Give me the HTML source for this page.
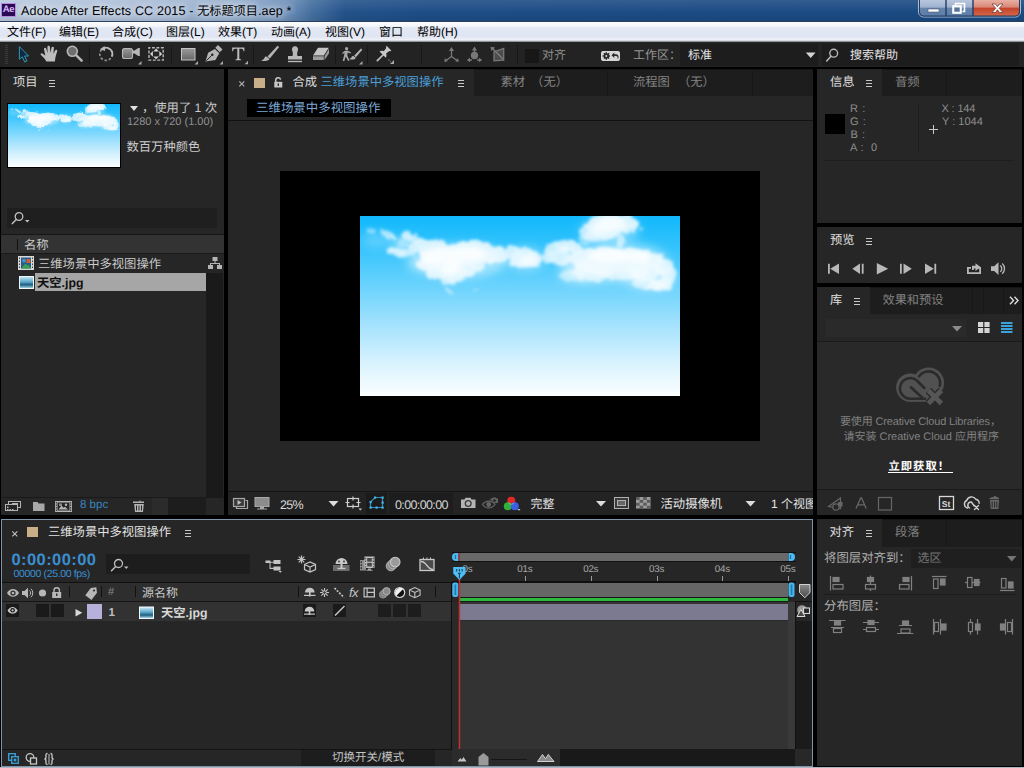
<!DOCTYPE html>
<html lang="zh-CN">
<head>
<meta charset="utf-8">
<title>Adobe After Effects CC 2015 - 无标题项目.aep *</title>
<style>
*{box-sizing:border-box;margin:0;padding:0}
html,body{width:1024px;height:768px;overflow:hidden;background:#000}
body{font-family:"Liberation Sans","Noto Sans CJK SC",sans-serif;font-size:12.3px;color:#cfcfcf;line-height:1;text-rendering:geometricPrecision}
#app{position:relative;width:1024px;height:768px;overflow:hidden;background:#000}
.a{position:absolute}
.tx{white-space:nowrap}
.t{position:absolute;white-space:nowrap;line-height:14px;height:14px}
svg.i{position:absolute;overflow:visible}
.panel{position:absolute;background:#262626}
.dk{background:#1d1d1d}
.dim{color:#828282}
.blue{color:#4a9fd9}

/* ---- title bar ---- */
#title{left:0;top:0;width:1024px;height:21px;background:
 linear-gradient(to right,#b9c9df 0px,#a9bcd7 150px,#8fa9cb 240px,#6f90ba 285px,#446f9f 312px,#23528a 345px,#1d4d86 420px,#1b4b84 700px,#1a4a82 1024px)}
#title:after{content:"";position:absolute;left:0;right:0;top:0;height:21px;background:linear-gradient(to bottom,rgba(255,255,255,.10),rgba(255,255,255,0) 60%,rgba(0,0,0,.08))}
#tline{left:0;top:21px;width:1024px;height:1px;background:#2c3f5e}
#ttext{left:21px;top:3px;font-size:12.6px;letter-spacing:.14px;color:#000;line-height:16px;height:16px;white-space:nowrap;text-shadow:0 0 6px rgba(255,255,255,.9),0 0 10px rgba(255,255,255,.7)}
#ttext .tx{font-size:12.150px;letter-spacing:0}
#aeico{left:1px;top:3px;width:15px;height:14px;background:#2a0a52;border:1px solid #b58be0;color:#d9b8ff;font-size:9.5px;font-weight:bold;line-height:12px;text-align:center;letter-spacing:-.3px}
/* ---- menu bar ---- */
#menu{left:0;top:22px;width:1024px;height:20px;background:linear-gradient(to bottom,#fbfcfe 0,#f4f6fb 4px,#e3e8f4 6px,#dfe5f2 14px,#e9edf6 17px,#f3f5fa 18px,#b9bdc6 19px,#6d6f73 20px)}
#menu .t{top:3px;color:#000;font-size:12px;line-height:15px;height:15px}
/* ---- toolbar ---- */
#tool{left:0;top:42px;width:1024px;height:25px;background:#232323}
.sep{position:absolute;top:3px;width:1px;height:19px;background:#181818}
</style>
</head>
<body>
<div id="app">
<!-- ===== window title bar ===== -->
<div id="title" class="a"></div>
<div id="tline" class="a"></div>
<div id="aeico" class="a">Ae</div>
<div id="ttext" class="a">Adobe After Effects CC 2015 - <span class="tx">无标题项目</span>.aep *</div>
<!-- window buttons -->
<svg class="i" style="left:917px;top:0" width="105" height="19" viewBox="0 0 105 19">
 <defs>
  <linearGradient id="wb" x1="0" y1="0" x2="0" y2="1"><stop offset="0" stop-color="#b7c6dc"/><stop offset=".45" stop-color="#9fb2cf"/><stop offset=".5" stop-color="#6685ad"/><stop offset="1" stop-color="#5b7eaa"/></linearGradient>
  <linearGradient id="wc" x1="0" y1="0" x2="0" y2="1"><stop offset="0" stop-color="#e9b0a4"/><stop offset=".45" stop-color="#d98776"/><stop offset=".5" stop-color="#c4432a"/><stop offset="1" stop-color="#d4674a"/></linearGradient>
 </defs>
 <path d="M1.5 0V12a5 5 0 0 0 5 5H98.5a5 5 0 0 0 5-5V0" fill="none" stroke="#c9d6e8" stroke-width="1" opacity=".8"/>
 <path d="M2.5 0V12a4 4 0 0 0 4 4H28.5V0Z" fill="url(#wb)"/>
 <path d="M29.5 0H55.5V16H29.5Z" fill="url(#wb)"/>
 <path d="M56.5 0H102.5V12a4 4 0 0 1-4 4H56.5Z" fill="url(#wc)"/>
 <path d="M2.5 0V12a4 4 0 0 0 4 4H98.5a4 4 0 0 0 4-4V0M29 0V16M56 0V16" fill="none" stroke="#283c5c" stroke-width="1"/>
 <rect x="11" y="9" width="11" height="3" fill="#fff" stroke="#4a5a74" stroke-width=".6"/>
 <path d="M38.5 5.5V3.5h9v8h-2" fill="none" stroke="#fff" stroke-width="1.6"/>
 <rect x="36.2" y="6.2" width="7.6" height="6.6" fill="none" stroke="#fff" stroke-width="2"/>
 <rect x="38.3" y="8.3" width="3.4" height="2.6" fill="#5c6f8c"/>
 <path d="M75 4h3.4l2.1 2.7L82.600 4H86l-3.800 4.300L86 12.5h-3.400l-2.100-2.700L78.400 12.500H75l3.800-4.200Z" fill="#fff" stroke="#6a3026" stroke-width=".7"/>
</svg>
<!-- ===== menu bar ===== -->
<div id="menu" class="a">
 <div class="t" style="left:7px"><span class="tx">文件</span>(F)</div>
 <div class="t" style="left:59px"><span class="tx">编辑</span>(E)</div>
 <div class="t" style="left:112px"><span class="tx">合成</span>(C)</div>
 <div class="t" style="left:166px"><span class="tx">图层</span>(L)</div>
 <div class="t" style="left:218px"><span class="tx">效果</span>(T)</div>
 <div class="t" style="left:271px"><span class="tx">动画</span>(A)</div>
 <div class="t" style="left:325px"><span class="tx">视图</span>(V)</div>
 <div class="t" style="left:379px"><span class="tx">窗口</span></div>
 <div class="t" style="left:417px"><span class="tx">帮助</span>(H)</div>
</div>
<!-- ===== toolbar ===== -->
<div id="tool" class="a">
 <div class="a" style="left:5px;top:3px;width:3px;height:20px;background:repeating-linear-gradient(to bottom,#3a3a3a 0,#3a3a3a 1px,#232323 1px,#232323 2px)"></div>
 <div class="sep" style="left:89px"></div><div class="sep" style="left:171px"></div><div class="sep" style="left:253px"></div>
 <div class="sep" style="left:335px"></div><div class="sep" style="left:367px"></div><div class="sep" style="left:421px"></div><div class="sep" style="left:517px"></div>
 <div class="a" style="left:525px;top:7px;width:14px;height:14px;background:#171717"></div>
 <div class="t" style="left:542px;top:6px;font-size:12px;color:#8c8c8c"><span class="tx">对齐</span></div>
 <div class="t" style="left:633px;top:6px;font-size:12px;color:#969696"><span class="tx">工作区：</span></div>
 <div class="a" style="left:680px;top:2px;width:138px;height:22px;background:#1d1d1d"></div>
 <div class="t" style="left:688px;top:6px;font-size:12px;color:#e4e4e4"><span class="tx">标准</span></div>
 <div class="a" style="left:822px;top:2px;width:197px;height:22px;background:#1d1d1d"></div>
 <div class="t" style="left:850px;top:6px;font-size:12px;color:#e4e4e4"><span class="tx">搜索帮助</span></div>
</div>
<svg class="i" style="left:0;top:42px" width="1024" height="25" viewBox="0 42 1024 25">
 <defs>
  <linearGradient id="gg" x1="0" y1="0" x2="0" y2="1"><stop offset="0" stop-color="#9a9a9a"/><stop offset="1" stop-color="#666"/></linearGradient>
 </defs>
 <!-- selection arrow (active) -->
 <path d="M19.400 46.600V59.300l2.900-2.500 2.400 5.200 2.300-1-2.400-5h4Z" fill="#0c2945" stroke="#3596b2" stroke-width="1" stroke-linejoin="miter"/>
 <!-- hand -->
 <path d="M46.300 61.600c-.5-2-2.300-3.700-5.400-6.600-.8-.9.200-2.100 1.400-1.500l3 2.100-1.300-6.300c-.3-1.700 1.800-2.200 2.300-.6l1.300 4.600-.2-6.300c0-1.700 2.300-1.700 2.500 0l.6 6.100 1-5.400c.3-1.600 2.500-1.300 2.400.4l-.5 6 1.700-3.500c.7-1.400 2.600-.6 2.100.9-1.300 3.600-2 6.300-2.300 10.100Z" fill="#bdbdbd"/>
 <!-- zoom -->
 <circle cx="72.300" cy="51.300" r="5" fill="#6e6e6e" stroke="#b6b6b6" stroke-width="1.600"/>
 <path d="M76.300 55.300l5.300 5.300" stroke="#b6b6b6" stroke-width="2.600" stroke-linecap="round"/>
 <!-- rotate -->
 <circle cx="106" cy="54.200" r="6.200" fill="none" stroke="#a8a8a8" stroke-width="1.600" stroke-dasharray="2.400 1.900" opacity=".85"/>
 <path d="M102.500 49a6.200 6.200 0 0 1 9.300 7.600" fill="none" stroke="#b8b8b8" stroke-width="1.700"/>
 <path d="M99.800 49.300l4.800-3.200.6 4.800Z" fill="#b8b8b8"/>
 <!-- camera -->
 <rect x="122.500" y="48.500" width="10" height="10" rx="2" fill="url(#gg)" stroke="#b8b8b8" stroke-width="1.100"/>
 <path d="M133 50.600h1.500l3.800-2.700h1.500v8.200h-1.500l-3.800-2.700H133Z" fill="#b8b8b8"/>
 <path d="M141.500 61v3.500H138Z" fill="#a8a8a8"/>
 <!-- pan behind -->
 <rect x="149" y="47.700" width="14.200" height="12.400" fill="none" stroke="#b8b8b8" stroke-width="1.400" stroke-dasharray="2.900 1.540" stroke-dashoffset="1.450"/>
 <path d="M156.100 48.500l2.900 2.900h-5.800ZM156.100 59.300l2.900-2.900h-5.800ZM150 53.900l2.900-2.900v5.800ZM162.200 53.900l-2.900-2.900v5.800Z" fill="#d0d0d0"/>
 <!-- rectangle -->
 <rect x="181.500" y="48.500" width="13.500" height="11.500" fill="url(#gg)" stroke="#c4c4c4"/>
 <path d="M198 61v3.500h-3.500Z" fill="#a8a8a8"/>
 <!-- pen -->
 <path d="M205.500 61.500l2.600-8.700 6.800-3.900 4.400 4.400-3.900 6.800Z" fill="#b4b4b4"/>
 <path d="M206.300 60.800l5.500-5.500" stroke="#232323" stroke-width="1"/>
 <circle cx="212.300" cy="54.800" r="1.200" fill="#232323"/>
 <path d="M215.300 47.700l2.700-2.700 4.500 4.500-2.700 2.700Z" fill="#b4b4b4"/>
 <path d="M223 61v3.500h-3.500Z" fill="#a8a8a8"/>
 <!-- T -->
 <path d="M232.200 47.600h12.200v3.600h-.8c-.3-1.700-.9-2.500-2.300-2.500h-2v9.300c0 1 .5 1.300 1.800 1.400v.8h-5.600v-.8c1.300-.1 1.800-.4 1.800-1.400v-9.300h-2c-1.400 0-2 .8-2.300 2.500h-.8Z" fill="#bcbcbc"/>
 <path d="M248 60.800v3.500h-3.500Z" fill="#a8a8a8"/>
 <!-- brush -->
 <path d="M277.500 45.800l1.600 1.300-9.300 11.300-2.300-1.900Z" fill="#b4b4b4"/>
 <path d="M267 57l2.600 2.100c-1.300 2-4.500 2.600-8.600 1.300 2.200-.5 3.200-1.600 3.600-3 .5-.9 1.500-1 2.400-.4Z" fill="#b4b4b4"/>
 <!-- stamp -->
 <path d="M292.500 56c.5-2 .5-3.500-.3-5.300a3.100 3.100 0 1 1 5.600 0c-.8 1.800-.8 3.300-.3 5.300h4.500v3.500h-14v-3.500Z" fill="#b8b8b8"/>
 <rect x="288" y="60.800" width="14" height="1.400" fill="#b8b8b8"/>
 <!-- eraser -->
 <path d="M313 55.500l5-7.800h10.800l-5 7.800Z" fill="#c4c4c4"/>
 <path d="M313 56.300h10.800v3.700H313ZM324.600 56l4.400-7.200v4.500l-4.400 6.700Z" fill="#9c9c9c"/>
 <!-- roto brush -->
 <circle cx="346.600" cy="48.600" r="1.600" fill="#a8a8a8"/>
 <path d="M344.300 51l3.300-.6 3.500 2.200-.5 1-3-1.200-.3 3 2.200 5-1.400.6-2.300-4.500-1.600 4.700-1.500-.4 1.500-5.700.3-2.700-1.500 1.600-1-.8Z" fill="#a8a8a8"/>
 <path d="M361 48.600l1.300 1.100-6.400 7.600-1.800-1.500Z" fill="#b4b4b4"/>
 <path d="M353.800 56.200l2 1.700c-1 1.600-3.600 2.100-6.800 1 1.700-.4 2.500-1.300 2.900-2.400.4-.7 1.200-.8 1.900-.3Z" fill="#b4b4b4"/>
 <path d="M362.500 61v3.500H359Z" fill="#a8a8a8"/>
 <!-- puppet pin -->
 <path d="M377.300 60.700l6.200-6.200" stroke="#c0c0c0" stroke-width="1.700" stroke-linecap="round"/>
 <path d="M379.500 51.500c1.500-.9 3-.9 4.300-.3l2.500-3.200c-.6-.9-.3-1.700.5-2l4.500 4.500c-.3.800-1.100 1.100-2 .5l-3.200 2.500c.6 1.300.6 2.800-.3 4.300Z" fill="#c8c8c8"/>
 <path d="M394 60v4h-4Z" fill="#a8a8a8"/>
 <path d="M388.500 59.500l2.200 2.200" stroke="#888" stroke-width="1.200" stroke-dasharray="1.200 1"/>
 <!-- axis modes (dim) -->
 <g fill="#787878" stroke="#787878" stroke-width="1.300">
  <path d="M451.500 50.500v6l-5.500 4M451.500 56.500l5.500 4" fill="none"/>
  <path d="M451.500 47l2.600 4h-5.200ZM444.300 62l.6-4 3 3.200ZM458.700 62l-.6-4-3 3.200Z" stroke="none"/>
  <circle cx="474.500" cy="55.500" r="3" />
  <path d="M474.500 50v2.500M468 60h4M477 60h4" fill="none"/>
  <path d="M474.500 46.500l2.600 4h-5.200ZM466.800 60l3.200-2.200v4.400ZM482.200 60l-3.200-2.200v4.400Z" stroke="none"/>
  <path d="M494 51.800l9.700-3.400v11.800l-9.700.6Z" fill="#4c4c4c"/>
  <path d="M492.500 48.500l11 11" fill="none" stroke-width="1.500"/>
  <path d="M490.500 46.800l4.600.7-3.800 3.600Z" stroke="none"/>
 </g>
 <!-- workspace sync pill -->
 <rect x="601" y="51" width="19" height="10" rx="2" fill="#d6d6d6"/>
 <g fill="#2a2a2a">
  <circle cx="606.300" cy="56" r="2.700"/>
  <path d="M605.600 52.300h1.400v7.400h-1.400ZM602.600 55.300h7.400v1.400h-7.400ZM603.400 53.800l1-1 5.200 5.200-1 1ZM608.600 52.800l1 1-5.200 5.200-1-1Z"/>
  <circle cx="606.300" cy="56" r="1" fill="#d6d6d6"/>
  <path d="M611.500 55.200l2.800-2.800v1.900h1.700c1.700 0 2.600 1.300 2.600 2.600 0 1.100-.5 1.900-1.300 2.400.3-.5.400-.9.400-1.400 0-1-.6-1.800-1.700-1.800h-1.700v1.900Z"/>
 </g>
 <!-- dropdown arrow -->
 <path d="M805.800 52.600h9.800l-4.900 5.400Z" fill="#d4d4d4"/>
 <!-- search magnifier -->
 <circle cx="833.700" cy="53.200" r="3.900" fill="none" stroke="#b8b8b8" stroke-width="1.400"/>
 <path d="M831 56.200l-4.300 4.800" stroke="#b8b8b8" stroke-width="1.600" stroke-linecap="round"/>
</svg>
<!-- shared sky paint servers / filters (artwork is drawn in 320x180 local units) -->
<svg width="0" height="0" style="position:absolute">
 <defs>
  <linearGradient id="sky" x1="0" y1="0" x2="0" y2="1">
   <stop offset="0" stop-color="#11b8fc"/><stop offset=".2" stop-color="#3ac5fc"/><stop offset=".42" stop-color="#72d5fd"/><stop offset=".62" stop-color="#a8e3fd"/><stop offset=".82" stop-color="#d9f3fe"/><stop offset="1" stop-color="#fbfeff"/>
  </linearGradient>
  <filter id="cb" x="-10" y="-10" width="340" height="200" filterUnits="userSpaceOnUse">
   <feTurbulence type="fractalNoise" baseFrequency=".11" numOctaves="3" seed="7" result="n"/>
   <feDisplacementMap in="SourceGraphic" in2="n" scale="7" xChannelSelector="R" yChannelSelector="G" result="d"/>
   <feGaussianBlur in="d" stdDeviation="1.500"/>
  </filter>
  <filter id="cb2" x="-10%" y="-10%" width="120%" height="120%"><feGaussianBlur stdDeviation="5"/></filter>
  <filter id="cb3" x="-10%" y="-10%" width="120%" height="120%"><feGaussianBlur stdDeviation="2.500"/></filter>
  <clipPath id="skyclip"><rect width="320" height="180"/></clipPath>
 </defs>
</svg>
<!-- ===== Project panel ===== -->
<div class="panel" style="left:1px;top:69px;width:223px;height:446px"></div>
<div class="t" style="left:13px;top:75px;color:#dcdcdc"><span class="tx">项目</span></div>
<svg class="i" style="left:49px;top:80px" width="6" height="7"><path d="M0 .5h6M0 3.500h6M0 6.500h6" stroke="#c8c8c8" stroke-width="1"/></svg>
<!-- thumbnail -->
<div class="a" style="left:7px;top:103px;width:114px;height:65px;background:#000"></div>
<svg class="i" style="left:8px;top:104px" width="112" height="63" viewBox="0 0 320 180" preserveAspectRatio="none">
 <rect width="320" height="180" fill="url(#sky)"/>
 <g clip-path="url(#skyclip)">
   <g filter="url(#cb2)" fill="#fff"><ellipse cx="16" cy="24" rx="14" ry="8" opacity="0.22"/><ellipse cx="42" cy="28" rx="12" ry="7" opacity="0.4"/><ellipse cx="100" cy="45" rx="48" ry="17" opacity="0.45"/><ellipse cx="60" cy="45" rx="14" ry="12" opacity="0.3"/><ellipse cx="255" cy="46" rx="54" ry="20" opacity="0.45"/><ellipse cx="222" cy="58" rx="24" ry="10" opacity="0.4"/><ellipse cx="250" cy="14" rx="30" ry="13" opacity="0.35"/><ellipse cx="290" cy="62" rx="26" ry="12" opacity="0.4"/><ellipse cx="166" cy="43" rx="18" ry="12" opacity="0.35"/></g>
   <g filter="url(#cb)" fill="#fff" opacity=".8">
    <ellipse cx="11.5" cy="15.2" rx="4" ry="2.8" opacity="0.5"/>
    <ellipse cx="27.5" cy="19" rx="9.5" ry="2.8" opacity="0.75" transform="rotate(33 27.5 19)"/>
    <ellipse cx="33.5" cy="22.8" rx="3" ry="2.2" opacity="0.8" transform="rotate(33 33.5 22.8)"/>
    <ellipse cx="47" cy="19" rx="5.2" ry="4.5" opacity="0.9"/>
    <ellipse cx="53" cy="22" rx="5" ry="4" opacity="0.8"/>
    <ellipse cx="36" cy="35.5" rx="9.5" ry="4.8" opacity="0.92"/>
    <ellipse cx="47" cy="37" rx="8" ry="4.5" opacity="0.8"/>
    <ellipse cx="56" cy="30" rx="7" ry="6" opacity="0.9"/>
    <ellipse cx="44" cy="27" rx="6" ry="4" opacity="0.45"/>
    <ellipse cx="62" cy="27" rx="8" ry="5.5"/>
    <ellipse cx="72" cy="28.5" rx="8" ry="5.5"/>
    <ellipse cx="81" cy="30" rx="7" ry="5.5"/>
    <ellipse cx="92" cy="33" rx="8" ry="5"/>
    <ellipse cx="103" cy="31" rx="9" ry="5.5"/>
    <ellipse cx="115" cy="29.5" rx="9" ry="5.5"/>
    <ellipse cx="127" cy="31.5" rx="8" ry="5.5"/>
    <ellipse cx="137" cy="35" rx="7" ry="5.5"/>
    <ellipse cx="75" cy="38" rx="17" ry="10"/>
    <ellipse cx="100" cy="40" rx="22" ry="11"/>
    <ellipse cx="125" cy="40" rx="14" ry="8"/>
    <ellipse cx="68" cy="48" rx="12" ry="7" opacity="0.95"/>
    <ellipse cx="80" cy="56" rx="14" ry="8" opacity="0.95"/>
    <ellipse cx="95" cy="58" rx="12" ry="8" opacity="0.95"/>
    <ellipse cx="108" cy="54" rx="10" ry="7" opacity="0.9"/>
    <ellipse cx="118" cy="50" rx="7" ry="5" opacity="0.85"/>
    <ellipse cx="88" cy="65" rx="7" ry="4" opacity="0.8"/>
    <ellipse cx="100" cy="64" rx="6" ry="3" opacity="0.7"/>
    <ellipse cx="140" cy="40" rx="8" ry="7" opacity="0.95"/>
    <ellipse cx="153" cy="36" rx="9" ry="6.500" opacity="0.9"/>
    <ellipse cx="165" cy="42" rx="14" ry="9.5" opacity="0.9"/>
    <ellipse cx="174" cy="43" rx="8" ry="8" opacity="0.85"/>
    <ellipse cx="160" cy="47" rx="10" ry="5" opacity="0.9"/>
    <ellipse cx="89.5" cy="74.5" rx="3.5" ry="1.8" opacity="0.6" transform="rotate(20 89.5 74.5)"/>
    <ellipse cx="115.4" cy="74" rx="3" ry="1.5" opacity="0.35"/>
    <ellipse cx="192" cy="33" rx="9" ry="6" opacity="0.9"/>
    <ellipse cx="205" cy="30" rx="11" ry="6" opacity="0.95"/>
    <ellipse cx="216" cy="33" rx="7" ry="5" opacity="0.9"/>
    <ellipse cx="190" cy="41" rx="8" ry="6" opacity="0.85"/>
    <ellipse cx="200" cy="42" rx="12" ry="8" opacity="0.9"/>
    <ellipse cx="225" cy="41" rx="16" ry="9" opacity="0.95"/>
    <ellipse cx="250" cy="41" rx="20" ry="10"/>
    <ellipse cx="275" cy="41" rx="18" ry="9"/>
    <ellipse cx="292" cy="44" rx="12" ry="8" opacity="0.95"/>
    <ellipse cx="302" cy="50" rx="10" ry="9" opacity="0.9"/>
    <ellipse cx="309" cy="59" rx="7" ry="9" opacity="0.85"/>
    <ellipse cx="300" cy="69" rx="14" ry="6" opacity="0.95"/>
    <ellipse cx="284" cy="67" rx="12" ry="6" opacity="0.7"/>
    <ellipse cx="262" cy="55" rx="26" ry="9" opacity="0.8"/>
    <ellipse cx="232" cy="56" rx="20" ry="9" opacity="0.72"/>
    <ellipse cx="212" cy="60" rx="12" ry="6" opacity="0.55"/>
    <ellipse cx="285" cy="56" rx="16" ry="9" opacity="0.8"/>
    <ellipse cx="245" cy="50" rx="30" ry="8" opacity="0.9"/>
    <ellipse cx="250" cy="5" rx="18" ry="8"/>
    <ellipse cx="266" cy="7" rx="12" ry="8"/>
    <ellipse cx="238" cy="10" rx="12" ry="8.5" opacity="0.95"/>
    <ellipse cx="228" cy="15" rx="8" ry="7.5" opacity="0.8"/>
    <ellipse cx="244" cy="17" rx="16" ry="6.5" opacity="0.95"/>
    <ellipse cx="250" cy="12" rx="16" ry="7"/>
    <ellipse cx="232" cy="20" rx="8" ry="5" opacity="0.7"/>
    <ellipse cx="268" cy="14" rx="7" ry="3.5" opacity="0.8"/>
    <ellipse cx="236" cy="22" rx="12" ry="4" opacity="0.55"/>
    <ellipse cx="261" cy="24" rx="4.5" ry="6" opacity="0.7"/>
    <ellipse cx="225" cy="24" rx="6" ry="5" opacity="0.5"/>
    <ellipse cx="280.5" cy="13.5" rx="1.6" ry="1.4" opacity="0.7"/>
   </g>
   <g filter="url(#cb3)" fill="#fff" opacity=".75"><ellipse cx="250" cy="9" rx="16" ry="6" opacity="0.9"/><ellipse cx="240" cy="14" rx="9" ry="5" opacity="0.7"/><ellipse cx="84" cy="41" rx="22" ry="9"/><ellipse cx="108" cy="38" rx="18" ry="7"/><ellipse cx="90" cy="52" rx="10" ry="7"/><ellipse cx="250" cy="40" rx="22" ry="7"/><ellipse cx="278" cy="41" rx="12" ry="6"/><ellipse cx="252" cy="5" rx="12" ry="4.5"/><ellipse cx="168" cy="44" rx="8" ry="5" opacity="0.8"/><ellipse cx="205" cy="33" rx="7" ry="3.5" opacity="0.8"/><ellipse cx="300" cy="70" rx="8" ry="2.5" opacity="0.8"/></g>
  </g>
</svg>
<svg class="i" style="left:130px;top:106px" width="8" height="5"><path d="M0 0h8L4 5Z" fill="#e0e0e0"/></svg>
<div class="t" style="left:142px;top:101px;color:#cacaca"><span class="tx">，使用了</span> 1 <span class="tx">次</span></div>
<div class="t" style="left:127px;top:115px;font-size:11px;color:#909090">1280 x 720 (1.00)</div>
<div class="t" style="left:126.500px;top:140px;color:#cacaca"><span class="tx">数百万种颜色</span></div>
<!-- search -->
<div class="a dk" style="left:7px;top:208px;width:210px;height:20px;background:#1f1f1f"></div>
<svg class="i" style="left:11px;top:211px" width="20" height="14"><circle cx="8" cy="5.500" r="3.800" fill="none" stroke="#c0c0c0" stroke-width="1.300"/><path d="M5.300 8.400L1.300 12.600" stroke="#c0c0c0" stroke-width="1.500" stroke-linecap="round"/><path d="M14 9h4.500L16.250 11.500Z" fill="#c0c0c0"/></svg>
<!-- list header -->
<div class="a" style="left:1px;top:234px;width:223px;height:1px;background:#161616"></div>
<div class="a" style="left:1px;top:235px;width:223px;height:18px;background:#333"></div>
<div class="a" style="left:1px;top:253px;width:223px;height:1px;background:#1a1a1a"></div>
<div class="a" style="left:17px;top:239px;width:1px;height:11px;background:#111"></div>
<div class="t" style="left:24px;top:238px;color:#cacaca"><span class="tx">名称</span></div>
<!-- rows -->
<svg class="i" style="left:18px;top:256px" width="16" height="14">
 <rect x="0" y="0" width="16" height="14" fill="#d8d8d8"/>
 <rect x="3" y="1.500" width="10" height="11" fill="#2a5a8c"/>
 <path d="M3 12.500l4.500-5 2 2 1-1 2.500 4Z" fill="#3aa050"/><circle cx="6" cy="4.700" r="1.900" fill="#4a90c8"/><rect x="8.500" y="3" width="4" height="4" fill="#c86432"/>
 <path d="M1 1.500h1v1.500H1ZM1 4.500h1V6H1ZM1 7.500h1V9H1ZM1 10.500h1V12H1ZM14 1.500h1v1.500h-1ZM14 4.500h1V6h-1ZM14 7.500h1V9h-1ZM14 10.500h1V12h-1Z" fill="#444"/>
</svg>
<div class="t" style="left:38px;top:257px;color:#cacaca"><span class="tx">三维场景中多视图操作</span></div>
<svg class="i" style="left:208px;top:257px" width="14" height="13" fill="#b4b4b4"><rect x="4.500" y="0" width="5" height="4"/><rect x="0" y="8" width="5" height="4"/><rect x="9" y="8" width="5" height="4"/><path d="M6.500 4h1v2h4.500v2h-1V7h-8v1h-1V6h4.500Z"/></svg>
<div class="a" style="left:35px;top:273px;width:171px;height:18px;background:#a6a6a6"></div>
<svg class="i" style="left:19px;top:276px" width="15" height="13">
 <defs><linearGradient id="th" x1="0" y1="0" x2="0" y2="1"><stop offset="0" stop-color="#bfe4f4"/><stop offset=".45" stop-color="#5aa6c8"/><stop offset=".7" stop-color="#1d5e80"/><stop offset="1" stop-color="#9fd0e0"/></linearGradient></defs>
 <rect width="15" height="13" fill="#eef6fa"/><rect x="1" y="1" width="13" height="11" fill="url(#th)"/>
</svg>
<div class="t" style="left:37px;top:276px;color:#101010;font-weight:bold"><span class="tx">天空</span>.jpg</div>
<!-- scroll column -->
<div class="a" style="left:206px;top:273px;width:17px;height:225px;background:#1a1a1a"></div>
<!-- bottom bar -->
<div class="a" style="left:1px;top:497px;width:223px;height:1px;background:#1a1a1a"></div>
<div class="a" style="left:152px;top:498px;width:54px;height:17px;background:#1d1d1d"></div>
<div class="a" style="left:152px;top:498px;width:16px;height:17px;background:#2b2b2b"></div>
<div class="t blue" style="left:80px;top:498px;font-size:11.500px;color:#3a84c0">8 bpc</div>
<svg class="i" style="left:4px;top:499px" width="150" height="16" fill="#b4b4b4">
 <!-- interpret footage -->
 <path d="M1 5h3V2h13v7h-3v3H1ZM5 3v2h9v3h2V3ZM2 6v5h11V6Z"/><rect x="8" y="4" width="6" height="1.500"/><rect x="3" y="7.500" width="1.500" height="1.500"/><rect x="3" y="10" width="1.500" height="1"/><rect x="5.500" y="10" width="1.500" height="1"/><rect x="8" y="10" width="1.500" height="1"/>
 <!-- folder -->
 <path d="M29 3h4.500l1.200 1.500H40.500V12H29Z" fill="#a8a8a8"/>
 <!-- new comp -->
 <path d="M51 2h17v11H51ZM53.500 3.500v8h12v-8Z"/><path d="M54.500 10.500l3-4 2 2.200 1.500-1 3 2.800Z"/><circle cx="62" cy="5.700" r="1.200"/><rect x="55" y="4.500" width="3" height="2.500" fill="#888"/>
 <path d="M51.800 3h1v1.500h-1ZM51.800 5.500h1V7h-1ZM51.800 8h1v1.500h-1ZM51.800 10.500h1V12h-1ZM66.200 3h1v1.500h-1ZM66.200 5.500h1V7h-1ZM66.200 8h1v1.500h-1ZM66.200 10.500h1V12h-1Z" fill="#262626"/>
 <!-- trash -->
 <path d="M132.500 2.500h3v-1h1v1h3.500v1.500h-11V2.500h3.500ZM130.200 5h9.600l-.8 8h-8ZM132 6.500v5h1v-5ZM134.500 6.500v5h1v-5ZM137 6.500v5h1v-5Z" fill-rule="evenodd"/>
</svg>
<!-- ===== Composition viewer panel ===== -->
<div class="panel" style="left:228px;top:69px;width:585px;height:446px"></div>
<!-- tab strip -->
<div class="a" style="left:474px;top:69px;width:339px;height:27px;background:#1d1d1d"></div>
<div class="a" style="left:474px;top:69px;width:339px;height:1px;background:#151515"></div>
<div class="a" style="left:607px;top:69px;width:1px;height:27px;background:#171717"></div>
<div class="a" style="left:752px;top:69px;width:1px;height:27px;background:#171717"></div>
<svg class="i" style="left:239px;top:80.500px" width="6" height="6"><path d="M.3.300l5 5M5.300.300l-5 5" stroke="#b4b4b4" stroke-width="1.100"/></svg>
<div class="a" style="left:254px;top:77.500px;width:10.500px;height:10px;background:#c8af87"></div>
<svg class="i" style="left:274px;top:77px" width="9" height="11"><path d="M1.700 5V3.200a2.500 2.500 0 0 1 4.900-.6" fill="none" stroke="#c8c8c8" stroke-width="1.500"/><rect x=".3" y="4.800" width="8" height="5.700" fill="#c8c8c8"/><rect x="3.600" y="6.500" width="1.400" height="2.300" fill="#262626"/></svg>
<div class="t" style="left:292.500px;top:75px;color:#dcdcdc"><span class="tx">合成</span></div>
<div class="t" style="left:320.500px;top:75px;color:#4a9fd9"><span class="tx">三维场景中多视图操作</span></div>
<svg class="i" style="left:458px;top:80px" width="6" height="7"><path d="M0 .5h6M0 3.500h6M0 6.500h6" stroke="#c8c8c8" stroke-width="1"/></svg>
<div class="t dim" style="left:500.500px;top:75px"><span class="tx">素材</span><span style="display:inline-block;width:6px"></span><span class="tx">（无）</span></div>
<div class="t dim" style="left:633px;top:75px"><span class="tx">流程图</span><span style="display:inline-block;width:8px"></span><span class="tx">（无）</span></div>
<!-- breadcrumb -->
<div class="a" style="left:247px;top:99px;width:144px;height:18px;background:#000"></div>
<div class="t" style="left:256px;top:101px;font-size:12.450px;color:#7ba7d6"><span class="tx">三维场景中多视图操作</span></div>
<div class="a" style="left:228px;top:120px;width:585px;height:1px;background:#121212"></div>
<!-- comp frame -->
<div class="a" style="left:280px;top:171px;width:480px;height:270px;background:#000"></div>
<svg class="i" style="left:360px;top:216px" width="320" height="180" viewBox="0 0 320 180">
 <rect width="320" height="180" fill="url(#sky)"/>
 <g clip-path="url(#skyclip)">
   <g filter="url(#cb2)" fill="#fff"><ellipse cx="16" cy="24" rx="14" ry="8" opacity="0.22"/><ellipse cx="42" cy="28" rx="12" ry="7" opacity="0.4"/><ellipse cx="100" cy="45" rx="48" ry="17" opacity="0.45"/><ellipse cx="60" cy="45" rx="14" ry="12" opacity="0.3"/><ellipse cx="255" cy="46" rx="54" ry="20" opacity="0.45"/><ellipse cx="222" cy="58" rx="24" ry="10" opacity="0.4"/><ellipse cx="250" cy="14" rx="30" ry="13" opacity="0.35"/><ellipse cx="290" cy="62" rx="26" ry="12" opacity="0.4"/><ellipse cx="166" cy="43" rx="18" ry="12" opacity="0.35"/></g>
   <g filter="url(#cb)" fill="#fff" opacity=".8">
    <ellipse cx="11.5" cy="15.2" rx="4" ry="2.8" opacity="0.5"/>
    <ellipse cx="27.5" cy="19" rx="9.5" ry="2.8" opacity="0.75" transform="rotate(33 27.5 19)"/>
    <ellipse cx="33.5" cy="22.8" rx="3" ry="2.2" opacity="0.8" transform="rotate(33 33.5 22.8)"/>
    <ellipse cx="47" cy="19" rx="5.2" ry="4.5" opacity="0.9"/>
    <ellipse cx="53" cy="22" rx="5" ry="4" opacity="0.8"/>
    <ellipse cx="36" cy="35.5" rx="9.5" ry="4.8" opacity="0.92"/>
    <ellipse cx="47" cy="37" rx="8" ry="4.5" opacity="0.8"/>
    <ellipse cx="56" cy="30" rx="7" ry="6" opacity="0.9"/>
    <ellipse cx="44" cy="27" rx="6" ry="4" opacity="0.45"/>
    <ellipse cx="62" cy="27" rx="8" ry="5.5"/>
    <ellipse cx="72" cy="28.5" rx="8" ry="5.5"/>
    <ellipse cx="81" cy="30" rx="7" ry="5.5"/>
    <ellipse cx="92" cy="33" rx="8" ry="5"/>
    <ellipse cx="103" cy="31" rx="9" ry="5.5"/>
    <ellipse cx="115" cy="29.5" rx="9" ry="5.5"/>
    <ellipse cx="127" cy="31.5" rx="8" ry="5.5"/>
    <ellipse cx="137" cy="35" rx="7" ry="5.5"/>
    <ellipse cx="75" cy="38" rx="17" ry="10"/>
    <ellipse cx="100" cy="40" rx="22" ry="11"/>
    <ellipse cx="125" cy="40" rx="14" ry="8"/>
    <ellipse cx="68" cy="48" rx="12" ry="7" opacity="0.95"/>
    <ellipse cx="80" cy="56" rx="14" ry="8" opacity="0.95"/>
    <ellipse cx="95" cy="58" rx="12" ry="8" opacity="0.95"/>
    <ellipse cx="108" cy="54" rx="10" ry="7" opacity="0.9"/>
    <ellipse cx="118" cy="50" rx="7" ry="5" opacity="0.85"/>
    <ellipse cx="88" cy="65" rx="7" ry="4" opacity="0.8"/>
    <ellipse cx="100" cy="64" rx="6" ry="3" opacity="0.7"/>
    <ellipse cx="140" cy="40" rx="8" ry="7" opacity="0.95"/>
    <ellipse cx="153" cy="36" rx="9" ry="6.5" opacity="0.9"/>
    <ellipse cx="165" cy="42" rx="14" ry="9.5" opacity="0.9"/>
    <ellipse cx="174" cy="43" rx="8" ry="8" opacity="0.85"/>
    <ellipse cx="160" cy="47" rx="10" ry="5" opacity="0.9"/>
    <ellipse cx="89.5" cy="74.5" rx="3.5" ry="1.8" opacity="0.6" transform="rotate(20 89.5 74.5)"/>
    <ellipse cx="115.4" cy="74" rx="3" ry="1.5" opacity="0.35"/>
    <ellipse cx="192" cy="33" rx="9" ry="6" opacity="0.9"/>
    <ellipse cx="205" cy="30" rx="11" ry="6" opacity="0.95"/>
    <ellipse cx="216" cy="33" rx="7" ry="5" opacity="0.9"/>
    <ellipse cx="190" cy="41" rx="8" ry="6" opacity="0.85"/>
    <ellipse cx="200" cy="42" rx="12" ry="8" opacity="0.9"/>
    <ellipse cx="225" cy="41" rx="16" ry="9" opacity="0.95"/>
    <ellipse cx="250" cy="41" rx="20" ry="10"/>
    <ellipse cx="275" cy="41" rx="18" ry="9"/>
    <ellipse cx="292" cy="44" rx="12" ry="8" opacity="0.95"/>
    <ellipse cx="302" cy="50" rx="10" ry="9" opacity="0.9"/>
    <ellipse cx="309" cy="59" rx="7" ry="9" opacity="0.85"/>
    <ellipse cx="300" cy="69" rx="14" ry="6" opacity="0.95"/>
    <ellipse cx="284" cy="67" rx="12" ry="6" opacity="0.7"/>
    <ellipse cx="262" cy="55" rx="26" ry="9" opacity="0.8"/>
    <ellipse cx="232" cy="56" rx="20" ry="9" opacity="0.72"/>
    <ellipse cx="212" cy="60" rx="12" ry="6" opacity="0.55"/>
    <ellipse cx="285" cy="56" rx="16" ry="9" opacity="0.8"/>
    <ellipse cx="245" cy="50" rx="30" ry="8" opacity="0.9"/>
    <ellipse cx="250" cy="5" rx="18" ry="8"/>
    <ellipse cx="266" cy="7" rx="12" ry="8"/>
    <ellipse cx="238" cy="10" rx="12" ry="8.5" opacity="0.95"/>
    <ellipse cx="228" cy="15" rx="8" ry="7.5" opacity="0.8"/>
    <ellipse cx="244" cy="17" rx="16" ry="6.5" opacity="0.95"/>
    <ellipse cx="250" cy="12" rx="16" ry="7"/>
    <ellipse cx="232" cy="20" rx="8" ry="5" opacity="0.7"/>
    <ellipse cx="268" cy="14" rx="7" ry="3.5" opacity="0.8"/>
    <ellipse cx="236" cy="22" rx="12" ry="4" opacity="0.55"/>
    <ellipse cx="261" cy="24" rx="4.5" ry="6" opacity="0.7"/>
    <ellipse cx="225" cy="24" rx="6" ry="5" opacity="0.5"/>
    <ellipse cx="280.5" cy="13.5" rx="1.6" ry="1.4" opacity="0.7"/>
   </g>
   <g filter="url(#cb3)" fill="#fff" opacity=".75"><ellipse cx="250" cy="9" rx="16" ry="6" opacity="0.9"/><ellipse cx="240" cy="14" rx="9" ry="5" opacity="0.7"/><ellipse cx="84" cy="41" rx="22" ry="9"/><ellipse cx="108" cy="38" rx="18" ry="7"/><ellipse cx="90" cy="52" rx="10" ry="7"/><ellipse cx="250" cy="40" rx="22" ry="7"/><ellipse cx="278" cy="41" rx="12" ry="6"/><ellipse cx="252" cy="5" rx="12" ry="4.5"/><ellipse cx="168" cy="44" rx="8" ry="5" opacity="0.8"/><ellipse cx="205" cy="33" rx="7" ry="3.5" opacity="0.8"/><ellipse cx="300" cy="70" rx="8" ry="2.5" opacity="0.8"/></g>
  </g>
</svg>
<!-- bottom bar -->
<div class="a" style="left:228px;top:491px;width:585px;height:1px;background:#151515"></div>
<div class="a" style="left:228px;top:492px;width:585px;height:23px;background:#232323"></div>
<div class="a" style="left:366px;top:493px;width:21px;height:21px;background:#1b1b1b"></div>
<div class="a" style="left:389px;top:493px;width:64px;height:21px;background:#1d1d1d"></div>
<div class="t" style="left:280px;top:498px;font-size:12.500px;letter-spacing:-.65px;color:#dadada">25%</div>
<div class="t" style="left:395px;top:498px;font-size:12.500px;color:#d4d4d4;letter-spacing:-.62px">0:00:00:00</div>
<div class="t" style="left:530.500px;top:497px;font-size:12px;color:#e4e4e4"><span class="tx">完整</span></div>
<div class="t" style="left:660.500px;top:497px;font-size:12.350px;color:#e4e4e4"><span class="tx">活动摄像机</span></div>
<div class="a" style="left:760px;top:493px;width:53px;height:21px;overflow:hidden"><div class="t" style="left:11px;top:4px;font-size:12px;color:#e4e4e4">1 <span class="tx">个视图</span></div></div>
<svg class="i" style="left:229px;top:492px" width="584" height="23" viewBox="229 492 584 23">
 <!-- always preview -->
 <g fill="none" stroke="#a8a8a8" stroke-width="1.200"><path d="M236.500 506.500v2h11v-8h-2"/><rect x="233.500" y="498.500" width="11" height="8" fill="#3a3a3a"/></g>
 <path d="M237.500 500l4 2.500-4 2.500Z" fill="#c0c0c0"/>
 <!-- monitor -->
 <rect x="255" y="497.500" width="14" height="9" fill="#8c8c8c" stroke="#a8a8a8"/><path d="M260 507h4v1.500h3v1h-10v-1h3Z" fill="#a8a8a8"/>
 <!-- arrows -->
 <path d="M328.500 501h10l-5 5.500Z" fill="#dcdcdc"/>
 <path d="M596 501h10l-5 5.500Z" fill="#dcdcdc"/>
 <path d="M745.500 501h10l-5 5.500Z" fill="#dcdcdc"/>
 <!-- region of interest -->
 <rect x="347.500" y="498.500" width="11" height="8" fill="none" stroke="#d0d0d0" stroke-width="1.200"/>
 <path d="M353 496.500v4M353 504.500v4M345.500 502.500h4M356.500 502.500h4" stroke="#d0d0d0" stroke-width="1.200"/>
 <path d="M358.500 508.500h3.500l-1.750 2Z" fill="#d0d0d0"/>
 <!-- mask toggle (blue) -->
 <path d="M370.500 507.500v-5.500l4.500-4.500h7.500v10Z" fill="none" stroke="#2d8fc0" stroke-width="1.200"/>
 <g fill="#49b6e6"><rect x="369.500" y="506.500" width="2.200" height="2.200"/><rect x="369.500" y="501" width="2.200" height="2.200"/><rect x="374" y="496.500" width="2.200" height="2.200"/><rect x="381.500" y="496.500" width="2.200" height="2.200"/><rect x="381.500" y="506.500" width="2.200" height="2.200"/><rect x="375.500" y="506.500" width="2.200" height="2.200"/><rect x="381.500" y="501.500" width="2.200" height="2.200"/></g>
 <!-- snapshot camera -->
 <path d="M461 499.500h3.500l1-1.800h5l1 1.800H475.500v8.500H461Z" fill="#b4b4b4"/><circle cx="468.200" cy="503.500" r="2.900" fill="#b4b4b4" stroke="#3a3a3a" stroke-width="1.300"/>
 <!-- show snapshot (dim) -->
 <g opacity=".55"><path d="M482.500 504.500c3-4.500 9.500-4.500 12.500 0-3 4.500-9.500 4.500-12.500 0Z" fill="none" stroke="#9a9a9a" stroke-width="1.300"/><circle cx="488.700" cy="504.500" r="2.400" fill="#9a9a9a"/>
 <path d="M490.500 498.500h1.800l.6-1h3l.6 1H498v4.500h-3.500c-.8-1.500-2.400-2.400-4-2.700Z" fill="#9a9a9a"/><circle cx="494.500" cy="500.600" r="1.300" fill="#232323"/></g>
 <!-- rgb -->
 <circle cx="511.300" cy="500.700" r="4" fill="#e02a2a"/><circle cx="507.800" cy="506.300" r="4" fill="#2fb13a"/><circle cx="514.800" cy="506.300" r="4" fill="#3a5fe0"/>
 <path d="M511.300 504.800a4 4 0 0 0 3.200-2 4 4 0 0 0-3.200 1.500 4 4 0 0 0-3.200-1.500 4 4 0 0 0 3.200 2Z" fill="#d8d8e8" opacity=".5"/>
 <path d="M517.500 509h3l-1.500 1.800Z" fill="#d0d0d0"/>
 <!-- fast preview / ROI icon -->
 <rect x="614.500" y="497.500" width="14" height="11" fill="#3a3a3a" stroke="#b0b0b0"/><rect x="617.500" y="500.500" width="8" height="5" fill="#666" stroke="#b0b0b0"/>
 <!-- transparency grid -->
 <rect x="636" y="497" width="14.500" height="11.500" fill="#9c9c9c"/>
 <g fill="#5c5c5c"><rect x="636" y="497" width="3.600" height="2.900"/><rect x="643.200" y="497" width="3.600" height="2.900"/><rect x="639.600" y="499.900" width="3.600" height="2.900"/><rect x="646.800" y="499.900" width="3.700" height="2.900"/><rect x="636" y="502.800" width="3.600" height="2.900"/><rect x="643.200" y="502.800" width="3.600" height="2.900"/><rect x="639.600" y="505.700" width="3.600" height="2.800"/><rect x="646.800" y="505.700" width="3.700" height="2.800"/></g>
</svg>
<!-- ===== Info panel ===== -->
<div class="panel" style="left:817px;top:69px;width:205px;height:154px"></div>
<div class="a dk" style="left:882px;top:69px;width:140px;height:27px"></div>
<div class="a" style="left:946px;top:69px;width:1px;height:27px;background:#171717"></div>
<div class="a" style="left:882px;top:69px;width:140px;height:1px;background:#151515"></div>
<div class="t" style="left:830px;top:75px;color:#e0e0e0"><span class="tx">信息</span></div>
<svg class="i" style="left:866px;top:80px" width="6" height="7"><path d="M0 .5h6M0 3.500h6M0 6.500h6" stroke="#c8c8c8" stroke-width="1"/></svg>
<div class="t dim" style="left:895px;top:75px"><span class="tx">音频</span></div>
<div class="a" style="left:825px;top:114px;width:20px;height:20px;background:#000"></div>
<div class="t" style="left:850px;top:102px;font-size:11px;color:#8e8e8e;letter-spacing:.6px">R :</div>
<div class="t" style="left:850px;top:115px;font-size:11px;color:#8e8e8e;letter-spacing:.6px">G :</div>
<div class="t" style="left:850.500px;top:128px;font-size:11px;color:#8e8e8e;letter-spacing:.6px">B :</div>
<div class="t" style="left:850px;top:141px;font-size:11px;color:#8e8e8e;letter-spacing:.4px">A :&nbsp; 0</div>
<div class="a" style="left:918px;top:104px;width:1px;height:48px;background:#1e1e1e"></div>
<div class="t" style="left:941.500px;top:102px;font-size:11px;color:#8e8e8e;letter-spacing:-.15px">X : 144</div>
<div class="t" style="left:942px;top:115px;font-size:11px;color:#8e8e8e;letter-spacing:0">Y : 1044</div>
<svg class="i" style="left:929px;top:125px" width="9" height="9"><path d="M4.500 0v9M0 4.500h9" stroke="#c8c8c8" stroke-width="1"/></svg>
<div class="a" style="left:824px;top:160px;width:190px;height:1px;background:#1e1e1e"></div>

<!-- ===== Preview panel ===== -->
<div class="panel" style="left:817px;top:227px;width:205px;height:56px"></div>
<div class="t" style="left:830px;top:233px;color:#e0e0e0"><span class="tx">预览</span></div>
<svg class="i" style="left:866px;top:238px" width="6" height="7"><path d="M0 .5h6M0 3.500h6M0 6.500h6" stroke="#c8c8c8" stroke-width="1"/></svg>
<svg class="i" style="left:817px;top:258px" width="205" height="22" viewBox="817 258 205 22" fill="#b8b8b8">
 <path d="M828 263.700h1.800v10H828ZM839 263.500v10.400l-8.800-5.200Z"/>
 <path d="M860 263.500v10.400l-7.700-5.200ZM861.800 263.700h1.800v10h-1.800Z"/>
 <path d="M876.800 263v11.400l11.400-5.700Z"/>
 <path d="M900 263.700h1.800v10H900ZM903.500 263.500v10.400l8.300-5.200Z"/>
 <path d="M925 263.500v10.400l8.800-5.200ZM934.400 263.700h1.800v10h-1.800Z"/>
 <!-- loop/export -->
 <path d="M967 267h4v1.800h-2.200v3.400h10.400v-3.400H978V267h3v7h-14Z"/>
 <path d="M972 270v-4.200h3.500v-2.600l5 3.900-5 3.900v-2.600h-1.700V270Z"/>
 <!-- speaker -->
 <path d="M991 266.300h3.200l4.300-4v12.700l-4.300-4H991Z"/>
 <path d="M1000.300 265.600a4 4 0 0 1 0 6.200M1002.200 263.600a6.800 6.800 0 0 1 0 10.200" fill="none" stroke="#b8b8b8" stroke-width="1.300"/>
</svg>

<!-- ===== Library panel ===== -->
<div class="panel" style="left:817px;top:287px;width:205px;height:228px;background:#292929"></div>
<div class="a" style="left:817px;top:287px;width:205px;height:54px;background:#262626"></div>
<div class="a dk" style="left:870px;top:287px;width:152px;height:27px"></div>
<div class="a" style="left:870px;top:287px;width:152px;height:1px;background:#151515"></div>
<div class="a" style="left:972px;top:287px;width:1px;height:27px;background:#181818"></div>
<div class="a" style="left:983px;top:287px;width:1px;height:27px;background:#181818"></div>
<div class="a" style="left:1003px;top:287px;width:1px;height:27px;background:#181818"></div>
<div class="t" style="left:830px;top:293px;color:#e0e0e0"><span class="tx">库</span></div>
<svg class="i" style="left:854px;top:298px" width="6" height="7"><path d="M0 .5h6M0 3.500h6M0 6.500h6" stroke="#c8c8c8" stroke-width="1"/></svg>
<div class="t dim" style="left:882.500px;top:293px;font-size:12.200px"><span class="tx">效果和预设</span></div>
<svg class="i" style="left:1009px;top:296px" width="10" height="9"><path d="M1 .8l3.500 3.700L1 8.200M5.500.800l3.500 3.700-3.500 3.700" fill="none" stroke="#dcdcdc" stroke-width="1.400"/></svg>
<div class="a" style="left:826px;top:319px;width:140px;height:18px;background:#2a2a2a"></div>
<svg class="i" style="left:952px;top:326px" width="10" height="6"><path d="M0 0h10L5 5.500Z" fill="#8c8c8c"/></svg>
<svg class="i" style="left:978px;top:322px" width="12" height="11" fill="#d4d4d4"><rect width="5.200" height="5"/><rect x="6.400" width="5.200" height="5"/><rect y="6" width="5.200" height="5"/><rect x="6.400" y="6" width="5.200" height="5"/></svg>
<svg class="i" style="left:1001px;top:322px" width="12" height="11" fill="#3aa3dc"><rect width="11.500" height="2"/><rect y="3" width="11.500" height="2"/><rect y="6" width="11.500" height="2"/><rect y="9" width="11.500" height="2"/></svg>
<div class="a" style="left:817px;top:341px;width:205px;height:1px;background:#1a1a1a"></div>
<!-- CC icon -->
<svg class="i" style="left:895px;top:367px" width="52" height="42" viewBox="0 0 52 42">
 <g fill="#515151">
  <circle cx="15.300" cy="20.600" r="14.200"/><circle cx="33.600" cy="16" r="15.500"/><rect x="15" y="22" width="20" height="12.800"/>
 </g>
 <g fill="none" stroke="#2b2b2b" stroke-width="2.600" stroke-linecap="round">
  <path d="M29.300 21L21.92 13.51A10.300 10.300 0 1 0 15.30 31.70H30"/>
  <path d="M24.10 9.35A11.600 11.600 0 0 1 44.80 19.00"/>
  <path d="M15.900 20.300L27.300 30.800"/>
 </g>
 <path d="M33.400 23.500l13 13M46.400 23.500l-13 13" stroke="#2b2b2b" stroke-width="7.500" fill="none"/>
 <path d="M33.400 23.500l13 13M46.400 23.500l-13 13" stroke="#565656" stroke-width="4.600" fill="none"/>
</svg>
<div class="t" style="left:840px;top:415px;font-size:11px;color:#808080;letter-spacing:-.15px"><span class="tx">要使用</span> Creative Cloud Libraries<span class="tx">，</span></div>
<div class="t" style="left:843.500px;top:430px;font-size:11px;color:#808080;letter-spacing:-.02px"><span class="tx">请安装</span> Creative Cloud <span class="tx">应用程序</span></div>
<div class="t" style="left:888.500px;top:460px;font-size:11.300px;letter-spacing:1px;color:#fff"><span class="tx" style="font-weight:bold">立即获取！</span></div>
<div class="a" style="left:888px;top:472px;width:65px;height:1px;background:#fff"></div>
<div class="a" style="left:817px;top:489px;width:205px;height:1px;background:#1a1a1a"></div>
<div class="a" style="left:817px;top:490px;width:205px;height:25px;background:#262626"></div>
<svg class="i" style="left:817px;top:490px" width="205" height="25" viewBox="817 490 205 25">
 <g stroke="#666" fill="none" stroke-width="1.200">
  <path d="M828.500 506.500l12-8.500v10.500Z"/><circle cx="836" cy="507" r="3.200" fill="#262626"/><rect x="838" y="502" width="4.500" height="4.500" fill="#666" stroke="none"/>
  <path d="M856 508.500l4.700-10.500h.8l4.700 10.500M857.800 504.800h6.600" stroke-width="1.300"/>
  <rect x="878.500" y="497.500" width="13" height="12.500"/>
 </g>
 <rect x="939.500" y="496.500" width="14" height="13" fill="none" stroke="#d8d8d8" stroke-width="1.300"/>
 <text x="941.800" y="506.500" font-family="Liberation Sans, sans-serif" font-size="8.500" font-weight="bold" fill="#d8d8d8">St</text>
 <g fill="none" stroke="#d0d0d0" stroke-width="1.400" stroke-linecap="round">
  <path d="M967.500 508a4 4 0 0 1-.8-7.500 5 5 0 0 1 9-1.300 4.300 4.300 0 0 1 3.500 4"/>
  <path d="M969.500 508a3.200 3.200 0 0 1 1.800-6l3 4"/>
  <path d="M974.500 505.500l4 4M978.500 505.500l-4 4" stroke-width="1.300"/>
 </g>
 <path d="M992.500 497h1.500v-1h2v1h1.500l1.500 1v1.200h-9.500V498ZM990 500h9l-.7 9h-7.600ZM991.700 501.500v6h.9v-6ZM994 501.500v6h.9v-6ZM996.300 501.500v6h.9v-6Z" fill="#666" fill-rule="evenodd"/>
</svg>

<!-- ===== Align panel ===== -->
<div class="panel" style="left:817px;top:519px;width:205px;height:247px"></div>
<div class="a dk" style="left:882px;top:519px;width:140px;height:28px"></div>
<div class="a" style="left:946px;top:519px;width:1px;height:28px;background:#171717"></div>
<div class="a" style="left:882px;top:519px;width:140px;height:1px;background:#151515"></div>
<div class="t" style="left:829.500px;top:525px;color:#e0e0e0"><span class="tx">对齐</span></div>
<svg class="i" style="left:866px;top:530px" width="6" height="7"><path d="M0 .5h6M0 3.500h6M0 6.500h6" stroke="#c8c8c8" stroke-width="1"/></svg>
<div class="t dim" style="left:895px;top:525px"><span class="tx">段落</span></div>
<div class="t" style="left:824px;top:551px;font-size:12.400px;color:#b0b0b0"><span class="tx">将图层对齐到：</span></div>
<div class="a" style="left:911px;top:549px;width:110px;height:19px;background:#1f1f1f"></div>
<div class="t" style="left:917.500px;top:551px;font-size:12px;color:#747474"><span class="tx">选区</span></div>
<svg class="i" style="left:1007px;top:556px" width="10" height="6"><path d="M0 0h9.500L4.750 5.500Z" fill="#747474"/></svg>
<div class="a" style="left:824px;top:594px;width:192px;height:1px;background:#1c1c1c"></div>
<div class="t" style="left:824px;top:599px;font-size:12.400px;color:#b0b0b0"><span class="tx">分布图层：</span></div>
<svg class="i" style="left:817px;top:570px" width="205" height="70" viewBox="817 570 205 70">
 <g fill="#808080" stroke="#808080" stroke-width="1.200">
  <!-- align left -->
  <path d="M830.500 576v14.500" fill="none"/><rect x="833" y="577.500" width="6" height="4" /><rect x="833" y="584.500" width="10" height="4.500" fill="none"/>
  <!-- align h center -->
  <path d="M870.500 575.500v15.500" fill="none"/><rect x="867.500" y="577.500" width="6" height="4"/><rect x="865.500" y="584.500" width="10" height="4.500" fill="#262626"/>
  <!-- align right -->
  <path d="M911.500 576v14.500" fill="none"/><rect x="903" y="577.500" width="6" height="4"/><rect x="899.500" y="584.500" width="9.500" height="4.500" fill="none"/>
  <!-- align top -->
  <path d="M932 576.500h14.500" fill="none"/><rect x="933.500" y="579" width="4.500" height="9.500" fill="none"/><rect x="940.500" y="579" width="4.500" height="6"/>
  <!-- align v center -->
  <path d="M965 582.500h15.500" fill="none"/><rect x="967.500" y="577.500" width="4.500" height="10" fill="#262626"/><rect x="974.500" y="579.500" width="4.500" height="6"/>
  <!-- align bottom -->
  <path d="M1000 590.500h14.500" fill="none"/><rect x="1001.500" y="578.500" width="4.500" height="9.500" fill="none"/><rect x="1008.500" y="582" width="4.500" height="6"/>
  <!-- distribute top -->
  <path d="M829 620.500h16.500M831 627.500h13" fill="none"/><rect x="834.500" y="621.500" width="6" height="3.500"/><rect x="833.500" y="628.500" width="8" height="4" fill="none"/>
  <!-- distribute v center -->
  <path d="M863 622.500h16M863 629.500h16" fill="none"/><rect x="868" y="620.500" width="6" height="4"/><rect x="866.500" y="627.500" width="9" height="4" fill="#262626"/>
  <!-- distribute bottom -->
  <path d="M899 625.500h13M897 633.500h16.500" fill="none"/><rect x="902.500" y="621" width="6" height="3.500"/><rect x="901" y="629" width="9" height="4" fill="none"/>
  <!-- distribute left -->
  <path d="M933.500 619v15.500M940.500 619v15.500" fill="none"/><rect x="934.500" y="622.500" width="4" height="9" fill="none"/><rect x="941.500" y="624" width="4.500" height="6"/>
  <!-- distribute h center -->
  <path d="M970.500 619v15.500M977.500 619v15.500" fill="none"/><rect x="968.500" y="622.500" width="4" height="9" fill="#262626"/><rect x="975.500" y="624" width="4.500" height="6"/>
  <!-- distribute right -->
  <path d="M1005.500 619v15.500M1012.500 619v15.500" fill="none"/><rect x="1000.500" y="624" width="4.500" height="6"/><rect x="1007.500" y="622.500" width="4" height="9" fill="none"/>
 </g>
</svg>
<!-- ===== Timeline panel (focused: blue outline) ===== -->
<div class="a" style="left:1px;top:519px;width:812px;height:248px;background:#7d95ab"></div>
<div class="panel" style="left:2px;top:520px;width:810px;height:246px"></div>
<svg class="i" style="left:12px;top:531px" width="6" height="6"><path d="M.3.300l5 5M5.300.300l-5 5" stroke="#c0c0c0" stroke-width="1.100"/></svg>
<div class="a" style="left:27px;top:527px;width:10.500px;height:10px;background:#c8af87"></div>
<div class="t" style="left:48px;top:525px;color:#e2e2e2"><span class="tx">三维场景中多视图操作</span></div>
<svg class="i" style="left:185px;top:530px" width="6" height="7"><path d="M0 .5h6M0 3.500h6M0 6.500h6" stroke="#c8c8c8" stroke-width="1"/></svg>
<!-- timecode -->
<div class="t" style="left:11.500px;top:551px;font-weight:bold;font-size:16.500px;line-height:18px;height:18px;color:#3a8fd0;letter-spacing:.42px">0:00:00:00</div>
<div class="t" style="left:13.500px;top:568px;font-size:10.500px;line-height:12px;height:12px;color:#3a90d2;letter-spacing:-.35px">00000 (25.00 fps)</div>
<div class="a" style="left:106px;top:554px;width:144px;height:20px;background:#1d1d1d"></div>
<svg class="i" style="left:110px;top:558px" width="20" height="14"><circle cx="8.500" cy="5.500" r="4" fill="none" stroke="#c0c0c0" stroke-width="1.300"/><path d="M5.700 8.500L1.500 12.800" stroke="#c0c0c0" stroke-width="1.500" stroke-linecap="round"/><path d="M14 8.500h4.500L16.250 11Z" fill="#c0c0c0"/></svg>
<!-- column header -->
<div class="a" style="left:2px;top:582px;width:450px;height:1px;background:#111"></div>
<div class="a" style="left:2px;top:583px;width:450px;height:18px;background:#2e2e2e"></div>
<div class="a" style="left:2px;top:601px;width:450px;height:1px;background:#151515"></div>
<div class="a" style="left:2px;top:602px;width:450px;height:19px;background:#323232"></div>
<div class="a" style="left:69px;top:586px;width:1px;height:11px;background:#111"></div>
<div class="a" style="left:101px;top:586px;width:1px;height:11px;background:#111"></div>
<div class="a" style="left:135px;top:586px;width:1px;height:11px;background:#111"></div>
<div class="a" style="left:298px;top:586px;width:1px;height:11px;background:#111"></div>
<div class="a" style="left:435px;top:586px;width:1px;height:11px;background:#111"></div>
<div class="t" style="left:108px;top:585px;font-size:11px;color:#8c8c8c">#</div>
<div class="t" style="left:142px;top:586px;color:#cacaca;font-size:12px"><span class="tx">源名称</span></div>
<!-- layer row widgets -->
<div class="a" style="left:6px;top:604px;width:13px;height:13px;background:#1a1a1a"></div>
<div class="a" style="left:36px;top:604px;width:13px;height:13px;background:#1a1a1a"></div>
<div class="a" style="left:51px;top:604px;width:13px;height:13px;background:#1a1a1a"></div>
<div class="a" style="left:87px;top:604px;width:15px;height:15px;background:#b5b1da"></div>
<div class="t" style="left:108.500px;top:606px;font-size:11.500px;font-weight:bold;color:#bdbdbd">1</div>
<div class="t" style="left:161px;top:606px;color:#d8d8d8;font-weight:bold"><span class="tx">天空</span>.jpg</div>
<div class="a" style="left:303px;top:604px;width:13px;height:13px;background:#1a1a1a"></div>
<div class="a" style="left:333px;top:604px;width:13px;height:13px;background:#1a1a1a"></div>
<div class="a" style="left:378px;top:604px;width:13px;height:13px;background:#1d1d1d"></div>
<div class="a" style="left:393px;top:604px;width:13px;height:13px;background:#1d1d1d"></div>
<div class="a" style="left:408px;top:604px;width:13px;height:13px;background:#1d1d1d"></div>
<!-- time area -->
<div class="a" style="left:451px;top:582px;width:1px;height:167px;background:#0e0e0e"></div>
<div class="a" style="left:452px;top:602px;width:8px;height:147px;background:#2a2a2a"></div>
<div class="a" style="left:460px;top:602px;width:328px;height:147px;background:#333"></div>
<div class="a" style="left:788px;top:602px;width:7px;height:147px;background:#3a3a3a"></div>
<div class="a" style="left:795px;top:601px;width:1px;height:148px;background:#111"></div>
<div class="a" style="left:796px;top:621px;width:16px;height:128px;background:#1b1b1b"></div>
<div class="a" style="left:795px;top:601px;width:17px;height:1px;background:#111"></div>
<!-- work area / navigator bars -->
<div class="a" style="left:452px;top:552px;width:344px;height:1px;background:#111"></div>
<div class="a" style="left:460px;top:553px;width:328px;height:8px;background:#696969"></div>
<div class="a" style="left:452px;top:561px;width:344px;height:1px;background:#111"></div>
<div class="a" style="left:452px;top:581px;width:344px;height:2px;background:#101010"></div>
<div class="a" style="left:460px;top:583px;width:328px;height:14px;background:#666"></div>
<div class="a" style="left:460px;top:597px;width:328px;height:1px;background:#161616"></div>
<div class="a" style="left:460px;top:598px;width:328px;height:3px;background:#2eb83e"></div>
<div class="a" style="left:460px;top:601px;width:328px;height:1px;background:#1a1a1a"></div>
<div class="a" style="left:460px;top:604px;width:328px;height:16px;background:#7b7a90"></div>
<div class="a" style="left:460px;top:620px;width:328px;height:1px;background:#2a2a2a"></div>
<!-- ruler labels -->
<div class="t" style="left:462.500px;top:563px;font-size:9.800px;color:#a8a8a8;letter-spacing:-.25px">0s</div>
<div class="t" style="left:517.300px;top:563px;font-size:9.800px;color:#a8a8a8;letter-spacing:-.25px">01s</div>
<div class="t" style="left:583.200px;top:563px;font-size:9.800px;color:#a8a8a8;letter-spacing:-.25px">02s</div>
<div class="t" style="left:649px;top:563px;font-size:9.800px;color:#a8a8a8;letter-spacing:-.25px">03s</div>
<div class="t" style="left:714.800px;top:563px;font-size:9.800px;color:#a8a8a8;letter-spacing:-.25px">04s</div>
<div class="t" style="left:780.300px;top:563px;font-size:9.800px;color:#a8a8a8;letter-spacing:-.25px">05s</div>
<div class="a" style="left:525px;top:576px;width:1px;height:5px;background:#9a9a9a"></div>
<div class="a" style="left:591px;top:576px;width:1px;height:5px;background:#9a9a9a"></div>
<div class="a" style="left:657px;top:576px;width:1px;height:5px;background:#9a9a9a"></div>
<div class="a" style="left:722px;top:576px;width:1px;height:5px;background:#9a9a9a"></div>
<div class="a" style="left:788px;top:576px;width:1px;height:5px;background:#9a9a9a"></div>
<!-- bottom bar -->
<div class="a" style="left:2px;top:749px;width:450px;height:1px;background:#141414"></div>
<div class="a" style="left:2px;top:750px;width:810px;height:16px;background:#262626"></div>
<div class="a" style="left:301px;top:750px;width:134px;height:16px;background:#1d1d1d"></div>
<div class="t" style="left:332px;top:751px;font-size:11.500px;color:#c4c4c4"><span class="tx">切换开关</span>/<span class="tx">模式</span></div>
<div class="a" style="left:452px;top:749px;width:108px;height:17px;background:#2b2b2b"></div>
<div class="a" style="left:560px;top:749px;width:235px;height:17px;background:#191919"></div>
<div class="a" style="left:795px;top:749px;width:17px;height:17px;background:#282828"></div>
<div class="a" style="left:491px;top:759px;width:36px;height:1px;background:#161616"></div>
<svg class="i" style="left:0;top:519px" width="813" height="249" viewBox="0 519 813 249">
 <defs>
  <linearGradient id="pg" x1="0" y1="0" x2="0" y2="1"><stop offset="0" stop-color="#8a8a8a"/><stop offset="1" stop-color="#4a4a4a"/></linearGradient>
  <linearGradient id="tn" x1="0" y1="0" x2="0" y2="1"><stop offset="0" stop-color="#c8e8f6"/><stop offset=".45" stop-color="#5aa6c8"/><stop offset=".72" stop-color="#1d5e80"/><stop offset="1" stop-color="#a8d4e4"/></linearGradient>
 </defs>
 <!-- ===== header icons row (comp flowchart, draft3d, shy, frame blend, motion blur, graph) ===== -->
 <g fill="#c4c4c4">
  <path d="M265.500 560.500h5v1.200h3v-1.700h7v4h-7v-1.200h-3v5h3v-1.200h7v4h-7v-1.700h-4v-6h-4Z"/>
  <path d="M278.500 571h3.500l-1.750 1.800Z"/>
 </g>
 <g stroke="#c4c4c4" stroke-width="1.200" fill="none">
  <path d="M301.500 555.500v8M297.500 559.500h8M298.700 556.700l5.600 5.600M304.300 556.700l-5.600 5.600"/>
  <path d="M304.500 564.500l5.500-2.500 5.500 2.500v5l-5.500 2.500-5.500-2.500ZM304.500 564.500l5.500 2.500 5.500-2.500M310 567v5"/>
 </g>
 <!-- shy master -->
 <rect x="333" y="565" width="16.500" height="6" fill="#6a6a6a"/>
 <path d="M335.500 564a6 6 0 0 1 12 0Z" fill="#c8c8c8"/><path d="M340.500 561.500h2v7h-2Z" fill="#c8c8c8"/><path d="M337.500 568.500h8" stroke="#c8c8c8" stroke-width="1.400"/>
 <circle cx="339" cy="561.500" r=".9" fill="#333"/><circle cx="344" cy="561.500" r=".9" fill="#333"/>
 <!-- frame blending master -->
 <rect x="360" y="560" width="6" height="10.500" fill="#8c8c8c"/><path d="M361.300 561.300v1.600M361.300 564.300v1.600M361.300 567.300v1.600" stroke="#2e2e2e" stroke-width="1.200"/>
 <rect x="364.500" y="556.500" width="10" height="11.500" fill="#c2c2c2"/><rect x="367.200" y="558" width="4.600" height="3.700" fill="#484848"/><rect x="367.200" y="562.800" width="4.600" height="3.700" fill="#484848"/>
 <path d="M365.700 557.800v1.400M365.700 560.600v1.400M365.700 563.400v1.400M365.700 566.200v1.200M373.300 557.800v1.400M373.300 560.600v1.400M373.300 563.400v1.400M373.300 566.200v1.200" stroke="#3a3a3a" stroke-width="1.100"/>
 <path d="M368 568.500h3v1.300h1.500v1h-6v-1H368Z" fill="#a8a8a8"/>
 <!-- motion blur master -->
 <circle cx="391" cy="566" r="4.800" fill="#8a8a8a" stroke="#b0b0b0" stroke-width="1"/><circle cx="393" cy="564" r="4.800" fill="#8a8a8a" stroke="#b0b0b0" stroke-width="1"/><circle cx="395.200" cy="562" r="4.800" fill="#9a9a9a" stroke="#c8c8c8" stroke-width="1.100"/>
 <!-- graph editor -->
 <rect x="420" y="559.500" width="14" height="11" fill="#4a4a4a" stroke="#c8c8c8" stroke-width="1.300"/>
 <path d="M421 561.500c6 0 6 8 12 8" fill="none" stroke="#c8c8c8" stroke-width="1.300"/>
 <path d="M423.500 557.500v2M427 557.500v2M430.500 557.500v2" stroke="#c8c8c8" stroke-width="1"/>

 <!-- ===== A/V column header ===== -->
 <path d="M7 593c3-5.500 9-5.500 12 0-3 5-9 5-12 0Z" fill="#b8b8b8"/><circle cx="13" cy="593" r="2.600" fill="#2e2e2e"/><circle cx="13" cy="593" r="1.300" fill="#b8b8b8"/>
 <path d="M22 591h2.500l3.500-3.300v10.600l-3.500-3.300H22Z" fill="#b8b8b8"/><path d="M29.500 590.500a3.300 3.300 0 0 1 0 5M31 588.800a5.800 5.800 0 0 1 0 8.400" fill="none" stroke="#b8b8b8" stroke-width="1"/>
 <circle cx="42.500" cy="593" r="3.600" fill="#b8b8b8"/>
 <path d="M54 592.500v-2a2.700 2.700 0 0 1 5.400 0v2" fill="none" stroke="#b8b8b8" stroke-width="1.400"/><rect x="52.200" y="592" width="9" height="6" fill="#b8b8b8"/><rect x="56" y="593.500" width="1.400" height="2.500" fill="#2e2e2e"/>
 <!-- label tag -->
 <path d="M85 594.500l6.500-6.500h5.500v5.500l-6.500 6.500Z" fill="#b8b8b8" transform="rotate(-8 91 593)"/><circle cx="94" cy="590.500" r="1.100" fill="#2e2e2e"/>
 <!-- ===== switches header ===== -->
 <g fill="#c4c4c4">
  <path d="M305 592.500a4.800 4.800 0 0 1 9.600 0Z"/><path d="M309 591h1.600v5.500H309Z"/><path d="M304 594.800h11.500v1.200H304Z" fill="#c4c4c4"/><path d="M306.500 596.500h6.500" stroke="#2e2e2e" stroke-width="0"/>
 </g>
 <g stroke="#c4c4c4" stroke-width="1.100" fill="none">
  <path d="M324.500 588v9M320 592.500h9M321.300 589.300l6.400 6.400M327.700 589.300l-6.400 6.400"/>
 </g>
 <circle cx="324.500" cy="592.500" r="1.700" fill="#2e2e2e" stroke="#c4c4c4" stroke-width="1"/>
 <path d="M334.500 588l9.500 9.500" stroke="#c4c4c4" stroke-width="1.700" stroke-dasharray="2 1.300" fill="none"/>
 <text x="349" y="596.500" font-family="Liberation Sans, sans-serif" font-style="italic" font-size="13" fill="#c4c4c4" letter-spacing="-.6">fx</text>
 <g fill="#c4c4c4"><path d="M363.500 587.500h11.500v10h-11.500ZM364.700 588.700v7.600h1.800v-7.600ZM367.700 588.700v3h6v-3ZM367.700 592.900v3.400h6v-3.400Z" fill-rule="evenodd"/></g>
 <circle cx="383" cy="594.500" r="3.600" fill="#7a7a7a" stroke="#9a9a9a" stroke-width=".9"/><circle cx="384.800" cy="592.800" r="3.600" fill="#7a7a7a" stroke="#9a9a9a" stroke-width=".9"/><circle cx="386.600" cy="591.200" r="3.600" fill="#8a8a8a" stroke="#b4b4b4" stroke-width=".9"/>
 <circle cx="399.700" cy="592.500" r="5" fill="#111" stroke="#d8d8d8" stroke-width="1.200"/><path d="M396.200 596a5 5 0 0 1 7-7Z" fill="#f0f0f0"/>
 <g stroke="#c4c4c4" stroke-width="1.100" fill="none"><path d="M409.500 590l5.300-2.500 5.300 2.500v5.200l-5.300 2.500-5.300-2.500ZM409.500 590l5.300 2.500 5.300-2.500M414.800 592.500v5.200"/></g>
 <!-- ===== layer row icons ===== -->
 <path d="M7.500 610.500c2.600-4.800 7.600-4.800 10.200 0-2.600 4.400-7.600 4.400-10.200 0Z" fill="#c4c4c4"/><circle cx="12.600" cy="610.300" r="2.300" fill="#1a1a1a"/><circle cx="12.600" cy="610.300" r="1.100" fill="#c4c4c4"/>
 <path d="M75.500 609v7.500l6.800-3.700Z" fill="#d8d8d8"/>
 <rect x="139" y="606.500" width="15" height="12.500" fill="#f2f8fb"/><rect x="140" y="607.500" width="13" height="10.500" fill="url(#tn)"/>
 <g fill="#c8c8c8"><path d="M304.700 611.500a4.800 4.800 0 0 1 9.600 0Z"/><path d="M308.700 610h1.600v5H308.700Z"/><path d="M304 613.500h11v1.200H304Z"/></g>
 <path d="M335 615.500l9.500-9.500" stroke="#c8c8c8" stroke-width="1.500"/>
 <!-- ===== time navigator handles / CTI ===== -->
 <path d="M458.500 553h-2.500a4 4 0 0 0 0 8h2.500Z" fill="#4cbcf2"/><path d="M455.500 555v4" stroke="#1f6f9c" stroke-width="1.200"/>
 <rect x="458.500" y="553" width="1.500" height="8" fill="#a83232"/>
 <path d="M788.500 553h2.500a4 4 0 0 1 0 8h-2.500Z" fill="#4cbcf2"/><path d="M790.500 555v4" stroke="#1f6f9c" stroke-width="1.200"/>
 <rect x="452.300" y="582.500" width="6" height="14.500" rx="2" fill="#49b7ee"/><rect x="454.500" y="584.500" width="1.700" height="10.500" fill="#1f7db2"/>
 <rect x="788.500" y="582.500" width="6" height="14.500" rx="2" fill="#49b7ee"/><rect x="790.700" y="584.500" width="1.700" height="10.500" fill="#1f7db2"/>
 <!-- playhead -->
 <rect x="458.700" y="575" width="1.500" height="174" fill="#c23030"/>
 <path d="M453.200 567h12.400v6.500l-6.200 6.500-6.200-6.500Z" fill="#4cbcf2"/>
 <path d="M456.700 569v2.500M459.400 569v2.500M462.100 569v2.500M458 573.300h2.800M459.400 573.300v5" stroke="#17384c" stroke-width="1" fill="none"/>
 <!-- comp marker bin + layer-shape icon -->
 <path d="M799.500 584.500h10.500v8l-5.250 5.200-5.250-5.200Z" fill="url(#pg)" stroke="#d0d0d0" stroke-width="1"/>
 <circle cx="802" cy="610" r="4.800" fill="#9a9a9a"/><path d="M797 616.500l4-7 4 7Z" fill="#4a4a4a" stroke="#d8d8d8" stroke-width="1"/><rect x="803.500" y="608" width="6" height="5.500" fill="#2a2a2a" stroke="#d8d8d8" stroke-width="1.100"/>
 <!-- ===== bottom-left toggles ===== -->
 <g fill="none" stroke-width="1.300"><rect x="8.700" y="753.700" width="6.600" height="6.600" stroke="#3aa3dc"/><rect x="11.700" y="756.700" width="6.600" height="6.600" stroke="#3aa3dc" fill="#262626"/><rect x="13.700" y="758.700" width="2.600" height="2.600" fill="#3aa3dc" stroke="none"/></g>
 <circle cx="30" cy="757.500" r="3.800" fill="none" stroke="#c8c8c8" stroke-width="1.300"/><rect x="30.500" y="758" width="6" height="6" fill="#262626" stroke="#c8c8c8" stroke-width="1.300"/>
 <path d="M47.500 753.500c-2 0-1.500 2-1.500 3.500s-.6 2-1.600 2c1 0 1.600.5 1.600 2s-.5 3.500 1.500 3.500M50.500 753.500c2 0 1.500 2 1.500 3.500s.6 2 1.600 2c-1 0-1.600.5-1.600 2s.5 3.500-1.500 3.500" fill="none" stroke="#c8c8c8" stroke-width="1.300"/>
 <path d="M49 754v10.500" stroke="#c8c8c8" stroke-width="1"/>
 <!-- ===== zoom slider ===== -->
 <path d="M457.500 761.500l2.800-3.500 1.400 1.700 1.800-2.700 3 4.500Z" fill="#c4c4c4"/>
 <path d="M478.500 765.500v-8.500l5-4 5 4v8.500Z" fill="#9a9a9a"/>
 <path d="M537.500 761.500l5-7 3 4.200 2.800-4.200 5.700 7Z" fill="#8a8a8a" stroke="#d0d0d0" stroke-width="1"/>
</svg>
<!-- window bottom edge -->
<div class="a" style="left:0;top:767px;width:1024px;height:1px;background:#aeb6c2"></div>
</div>
</body>
</html>
